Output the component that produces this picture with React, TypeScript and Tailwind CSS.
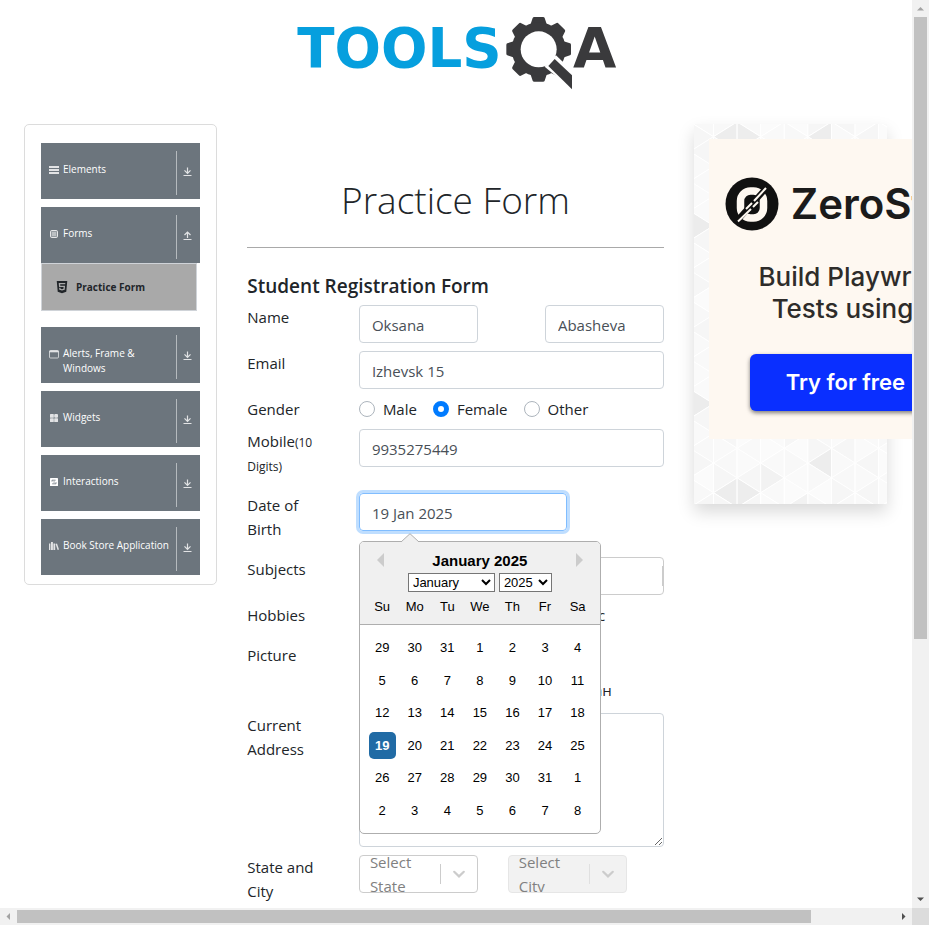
import type { ReactNode } from "react";
import { FaHtml5 } from "react-icons/fa";

const icon = "h-[10px] w-[10px] shrink-0";

const ElementsIcon = () => (
  <svg viewBox="0 0 10 10" className={icon} fill="currentColor">
    <path d="M0 1h10v2H0zM0 4h10v2H0zM0 7h10v2H0z" />
  </svg>
);
const FormsIcon = () => (
  <svg viewBox="0 0 10 10" className={icon} fill="none" stroke="currentColor">
    <rect x="1.5" y="1.5" width="7" height="7" rx="1.2" fill="currentColor" fillOpacity=".35" />
    <path d="M3 4h4M3 6h4" strokeWidth=".9" />
  </svg>
);
const WindowIcon = () => (
  <svg viewBox="0 0 10 10" className={icon} fill="none" stroke="currentColor">
    <rect x=".5" y="1.5" width="9" height="7.5" rx="1" strokeWidth=".8" />
    <path d="M.5 2.5h9" strokeWidth="1.6" />
  </svg>
);
const WidgetsIcon = () => (
  <svg viewBox="0 0 10 10" className={icon} fill="currentColor">
    <rect x="1" y="1" width="3.8" height="3.8" rx=".6" />
    <rect x="5.2" y="1" width="3.8" height="3.8" rx="1" />
    <rect x="1" y="5.2" width="3.8" height="3.8" rx=".6" />
    <rect x="5.2" y="5.2" width="3.8" height="3.8" rx=".6" />
  </svg>
);
const InteractionsIcon = () => (
  <svg viewBox="0 0 10 10" className={icon}>
    <rect x="1" y="1" width="8" height="8" rx=".6" fill="#fff" />
    <path d="M3 4.600V3.200h3.600M7 5.200v1.600H3.200M4.400 5h1.400" fill="none" stroke="#6c757d" strokeWidth=".8" />
  </svg>
);
const BooksIcon = () => (
  <svg viewBox="0 0 10 10" className={icon} fill="currentColor">
    <path d="M0 2.600h1.400V9H0zM2 1h1.900v8H2zM4.400 2.600h1.800V9H4.400zM6.600 3l1.400-.4L10 8.600 8.600 9z" />
  </svg>
);
const Arrow = ({ up = false }: { up?: boolean }) => (
  <svg viewBox="0 0 9 9" className="h-[9px] w-[9px]" fill="none" stroke="currentColor">
    <path d={up ? "M4.500 7V1M1.500 4l3-3 3 3" : "M4.500 .5V6M1.500 3.400l3 3 3-3"} strokeWidth="1.2" />
    <path d="M.5 8.500h8" strokeWidth="1" />
  </svg>
);

function Group({ label, children, open = false }: { label: string; children: ReactNode; open?: boolean }) {
  return (
    <button type="button" className="flex h-14 w-full items-stretch bg-[#6c757d] text-left text-white">
      <span className="flex flex-1 items-start gap-1 pt-[19px] pl-2 text-[10px] leading-[15px]">
        <span className="pt-[3px] text-white/80">{children}</span>
        <span className="flex-1">{label}</span>
      </span>
      <span className="mt-2 mb-1 flex w-6 items-center justify-center border-l border-[#b5babe] pr-[3px] pb-[3px] text-white/80">
        <Arrow up={open} />
      </span>
    </button>
  );
}

function Sidebar() {
  return (
    <nav className="flex flex-col gap-2 rounded-[5px] border border-[#dcdcdc] px-4 pt-[18px] pb-[9px]">
      <Group label="Elements"><ElementsIcon /></Group>
      <div className="mb-2">
        <Group label="Forms" open><FormsIcon /></Group>
        <a href="#form" className="mr-[3px] flex h-12 items-center gap-[7px] border border-[#cfd3d8] bg-[#a9a9a9] pl-[13px] text-[10px] font-bold text-[#212529]">
          <FaHtml5 className="h-[14px] w-[14px]" />
          Practice Form
        </a>
      </div>
      <Group label="Alerts, Frame & Windows"><WindowIcon /></Group>
      <Group label="Widgets"><WidgetsIcon /></Group>
      <Group label="Interactions"><InteractionsIcon /></Group>
      <Group label="Book Store Application"><BooksIcon /></Group>
    </nav>
  );
}

function Logo() {
  return (
    <svg viewBox="-12 0 1020 255" className="h-[85px] w-[340px]" role="img" aria-label="TOOLSQA">
      <text x="22" y="170" fontSize="164" fontWeight="700" fill="#069fde" className="font-['DejaVu_Sans',sans-serif]">TOOLS</text>
      <g fill="#3a3a3c">
        {[0, 45, 90, 135, 180, 225, 270, 315].map((a) => (
          <path key={a} d="M720 48L728 24Q729 21 733 21H759Q763 21 764 24L772 48z" transform={`rotate(${a} 746 118)`} />
        ))}
        <circle cx="746" cy="118" r="81" />
      </g>
      <circle cx="746" cy="118" r="54" fill="#fff" />
      <path d="M798 136L860 196V250L764 170z" fill="#fff" />
      <path d="M794 147L846 196V238L775 168z" fill="#3a3a3c" />
      <text x="849" y="170" fontSize="168" fontWeight="700" fill="#3a3a3c" className="font-['DejaVu_Sans',sans-serif]">A</text>
    </svg>
  );
}

const DAYS = [29, 30, 31, ...Array.from({ length: 31 }, (_, i) => i + 1), 1, 2, 3, 4, 5, 6, 7, 8];

function Calendar() {
  return (
    <div className="absolute top-[48px] left-0 z-10 w-[242px] rounded-[5px] border border-[#aeaeae] bg-white font-['Liberation_Sans',Arial,sans-serif] text-[13px] text-black">
      <svg viewBox="0 0 18 9" className="absolute -top-[9px] left-[41px] h-[9px] w-[18px]">
        <path d="M0 9L9 .7 18 9" fill="#f0f0f0" stroke="#aeaeae" />
      </svg>
      <div className="rounded-t-[4px] border-b border-[#aeaeae] bg-[#f0f0f0] px-[6px] pt-[9px] pb-1">
        <div className="flex items-start justify-between px-[11px]">
          <button type="button" aria-label="Previous Month" className="mt-[2px] h-0 w-0 border-y-[7px] border-r-[7px] border-y-transparent border-r-[#ccc]" />
          <span className="text-[15px] leading-5 font-bold">January 2025</span>
          <button type="button" aria-label="Next Month" className="mt-[2px] h-0 w-0 border-y-[7px] border-l-[7px] border-y-transparent border-l-[#ccc]" />
        </div>
        <div className="mt-[2px] flex justify-center gap-1">
          <select aria-label="Month" className="h-[19px] w-[87px] border border-[#767676] bg-white">
            <option>January</option>
          </select>
          <select aria-label="Year" className="h-[19px] w-[53px] border border-[#767676] bg-white">
            <option>2025</option>
          </select>
        </div>
        <div className="mt-[2px] grid h-[26px] grid-cols-7 items-center text-center">
          {["Su", "Mo", "Tu", "We", "Th", "Fr", "Sa"].map((d) => <span key={d}>{d}</span>)}
        </div>
      </div>
      <div className="mx-[6px] mt-[7px] mb-[6px] grid h-[195px] grid-cols-7 grid-rows-6 place-items-center">
        {DAYS.map((d, i) => (
          <button
            key={i}
            type="button"
            className={i === 21 ? "h-[27px] w-[27px] rounded-[5px] bg-[#216ba5] font-bold text-white" : "h-[27px] w-[27px]"}
          >
            {d}
          </button>
        ))}
      </div>
    </div>
  );
}

const field = "h-[38px] w-full rounded-[4px] border border-[#ced4da] bg-white px-3 pt-[2px] text-[15px] text-[#495057] outline-none";

function Row({ label, id, children, last = "mb-2" }: { label: ReactNode; id?: string; children: ReactNode; last?: string }) {
  return (
    <div className="-mx-[15px] mb-2 grid grid-cols-12">
      <label htmlFor={id} className={`col-span-3 px-[15px] ${last}`}>{label}</label>
      {children}
    </div>
  );
}

function Choice({ type, name, label, checked = false }: { type: "radio" | "checkbox"; name: string; label: string; checked?: boolean }) {
  return (
    <label className="flex items-center gap-2">
      <input
        type={type}
        name={name}
        defaultChecked={checked}
        className={`h-4 w-4 appearance-none border border-[#adb5bd] bg-white checked:border-[5px] checked:border-[#007bff] ${type === "radio" ? "rounded-full" : "rounded-[4px]"}`}
      />
      {label}
    </label>
  );
}

function Picker({ id, lines, disabled = false }: { id: string; lines: [string, string]; disabled?: boolean }) {
  return (
    <div className="col-span-4 px-[15px]">
      <div className={`relative flex h-[38px] items-center overflow-hidden rounded-[4px] border pl-[10px] ${disabled ? "border-[#e6e6e6] bg-[#f2f2f2]" : "border-[#ccc] bg-white"}`}>
        <span className="flex-1 text-[#808080]">{lines[0]}<br />{lines[1]}</span>
        <span className={`h-5 w-px ${disabled ? "bg-[#e0e0e0]" : "bg-[#ccc]"}`} />
        <svg viewBox="0 0 20 20" className="mx-2 h-5 w-5" fill="none" stroke="#ccc" strokeWidth="2.2" strokeLinecap="round">
          <path d="M5.200 7.800L10 12.400l4.800-4.600" />
        </svg>
        <select id={id} aria-label={lines.join(" ")} disabled={disabled} className="absolute inset-0 h-full w-full opacity-0" />
      </div>
    </div>
  );
}

function Form() {
  return (
    <form id="form">
      <h1 className="mt-[52px] mb-[23px] text-center text-[37px] leading-[48px] font-light">Practice Form</h1>
      <hr className="border-[#a9a9a9]" />
      <h5 className="mt-[26px] mb-[7px] text-[19px] leading-6 font-semibold">Student Registration Form</h5>
      <Row label="Name" id="first">
        <div className="col-span-4 px-[15px]"><input id="first" defaultValue="Oksana" className={field} /></div>
        <div className="col-span-4 col-start-9 px-[15px]"><input aria-label="Last Name" defaultValue="Abasheva" className={field} /></div>
      </Row>
      <Row label="Email" id="email">
        <div className="col-span-9 px-[15px]"><input id="email" defaultValue="Izhevsk 15" className={field} /></div>
      </Row>
      <Row label="Gender" last="">
        <div className="col-span-9 flex gap-4 px-[15px]">
          <Choice type="radio" name="gender" label="Male" />
          <Choice type="radio" name="gender" label="Female" checked />
          <Choice type="radio" name="gender" label="Other" />
        </div>
      </Row>
      <Row label={<>Mobile<small className="text-[12px] leading-none">(10 Digits)</small></>} id="mobile">
        <div className="col-span-9 px-[15px]"><input id="mobile" defaultValue="9935275449" className={field} /></div>
      </Row>
      <Row label="Date of Birth" id="dob">
        <div className="relative col-span-9 mx-[15px]">
          <input id="dob" defaultValue="19 Jan 2025" className="h-[38px] w-[208px] rounded-[4px] border border-[#80bdff] px-3 pt-[2px] text-[15px] text-[#495057] ring-[3px] ring-[#bfdeff] outline-none" />
          <Calendar />
        </div>
      </Row>
      <Row label="Subjects" id="subjects">
        <div className="col-span-9 px-[15px]">
          <div className="flex h-[38px] items-center rounded-[4px] border border-[#ccc]">
            <input id="subjects" className="min-w-0 flex-1 outline-none" />
            <span className="h-5 w-px bg-[#ccc]" />
          </div>
        </div>
      </Row>
      <Row label="Hobbies">
        <div className="col-span-9 flex h-6 gap-4 px-[15px]">
          <Choice type="checkbox" name="hobbies" label="Sports" />
          <Choice type="checkbox" name="hobbies" label="Reading" />
          <Choice type="checkbox" name="hobbies" label="Music" />
        </div>
      </Row>
      <Row label="Picture" id="picture">
        <div className="col-span-9 px-[15px] pt-8">
          <label className="flex h-[30px] w-[253px] items-center justify-between whitespace-nowrap">
            <input id="picture" type="file" className="sr-only" />
            <span className="rounded-[3px] border border-[#767676] bg-[#efefef] px-1 text-black">Выберите файл</span>
            <span>Файл не выбран</span>
          </label>
        </div>
      </Row>
      <Row label="Current Address" id="address">
        <div className="col-span-9 px-[15px]">
          <textarea id="address" rows={5} className="block h-[134px] w-full rounded-[4px] border border-[#ced4da] outline-none" />
        </div>
      </Row>
      <Row label="State and City" id="state">
        <Picker id="state" lines={["Select", "State"]} />
        <Picker id="city" lines={["Select", "City"]} disabled />
      </Row>
    </form>
  );
}

const COL = 23.6;
const EDGE = 29.67;
const TONES = ["#f8f8f8", "#fafafa", "#f6f6f6", "#fbfbfb", "#f9f9f9"];
/** Darker triangles, keyed by column, row and the side their point faces away from. */
const SHADED: Record<string, string> = {
  "0,12,r": "#ededed", "1,11,l": "#ededed", "3,12,r": "#f2f2f2", "4,11,r": "#ededed",
  "0,0,r": "#ededed", "1,-1,l": "#ededed", "4,0,r": "#ededed",
  "-1,2,l": "#ececec", "-1,8,l": "#ececec", "2,11,l": "#f2f2f2",
};

/** Triangle mosaic behind the advert. */
function Mosaic() {
  const cells: ReactNode[] = [];
  for (let k = -1; k < 8; k++) {
    const x = 19.5 + COL * k;
    const shift = k % 2 === 0 ? 0 : EDGE / 2;
    for (let n = -2; n < 14; n++) {
      const y = 12.7 + EDGE * n + shift;
      const h = Math.abs(k * 7 + (n % 6) * 3);
      cells.push(
        <path key={`${k},${n},r`} d={`M${x} ${y}l${COL} ${-EDGE / 2}v${EDGE}z`} fill={SHADED[`${k},${n},r`] ?? TONES[h % 5]} />,
        <path key={`${k},${n},l`} d={`M${x} ${y}v${EDGE}l${COL} ${-EDGE / 2}z`} fill={SHADED[`${k},${n},l`] ?? TONES[(h + 2) % 5]} />,
      );
    }
  }
  return (
    <svg className="absolute inset-0 h-full w-full" stroke="#fff" strokeWidth="1">
      {cells}
    </svg>
  );
}

function Advert() {
  return (
    <aside className="relative h-[380px] bg-[#f8f8f8] p-[15px] shadow-[0_8px_16px_rgba(0,0,0,0.15)]">
      <Mosaic />
      <a href="#zerostep" className="relative block h-[300px] w-[300px] bg-[#fef8f1] pt-[38px] font-['Inter',sans-serif]">
        <span className="flex items-center gap-3 pl-4">
          <svg viewBox="0 0 54 54" className="h-[54px] w-[54px] shrink-0">
            <circle cx="27" cy="27" r="26.500" fill="#111" />
            <rect x="15.500" y="14" width="23" height="27" rx="10" fill="none" stroke="#fef8f1" strokeWidth="7.500" />
            <path d="M11 45L43 9" stroke="#111" strokeWidth="6" />
            <path d="M13 44.500L26 32M21 32l6-6M28 30l5-5M29 24L41 11" stroke="#fef8f1" strokeWidth="2" />
          </svg>
          <span className="text-[42px] leading-[54px] font-semibold text-[#1b1b1b]">ZeroStep</span>
        </span>
        <span className="mt-[30px] block text-center text-[26px] leading-[32px] font-medium text-[#2e2c2a]">
          Build Playwright<br />Tests using AI
        </span>
        <span className="mt-[29px] ml-[41px] flex h-[57px] w-[220px] items-center rounded-[6px] bg-[#0a2fff] pb-[2px] pl-9 text-[22px] font-semibold text-white shadow-[0_2px_4px_rgba(0,0,0,0.5)]">
          Try for free
        </span>
      </a>
    </aside>
  );
}

export default function App() {
  return (
    <div className="grid h-screen grid-cols-[minmax(0,1fr)_17px] grid-rows-[minmax(0,1fr)_17px] bg-white font-['Open_Sans',sans-serif] text-[15px] leading-6 text-[#212529]">
      <div className="overflow-hidden">
        <header className="flex justify-center pt-[10px] pb-[29px]"><Logo /></header>
        <main className="flex items-start pr-[10px] pl-[9px]">
          <div className="w-1/4 px-[15px]"><Sidebar /></div>
          <div className="w-1/2 px-[15px]"><Form /></div>
          <div className="w-1/4 px-[15px]"><Advert /></div>
        </main>
      </div>
      <div className="flex flex-col items-center bg-[#f1f1f1]">
        <svg viewBox="0 0 17 17" className="h-[17px] w-[17px]"><path d="M5 10.500h7L8.500 7z" fill="#a3a3a3" /></svg>
        <div className="min-h-0 w-full flex-1 px-[2px]"><div className="h-[71.2%] bg-[#c1c1c1]" /></div>
        <svg viewBox="0 0 17 17" className="h-[17px] w-[17px]"><path d="M5 6.500h7L8.500 10z" fill="#505050" /></svg>
      </div>
      <div className="flex items-center bg-[#f1f1f1]">
        <svg viewBox="0 0 17 17" className="h-[17px] w-[17px]"><path d="M10 5v7L6.500 8.500z" fill="#a3a3a3" /></svg>
        <div className="h-full min-w-0 flex-1 py-[2px]"><div className="h-full w-[90.4%] bg-[#c1c1c1]" /></div>
        <svg viewBox="0 0 17 17" className="h-[17px] w-[17px]"><path d="M7 5v7l3.500-3.500z" fill="#505050" /></svg>
      </div>
      <div className="bg-[#dcdcdc]" />
    </div>
  );
}
